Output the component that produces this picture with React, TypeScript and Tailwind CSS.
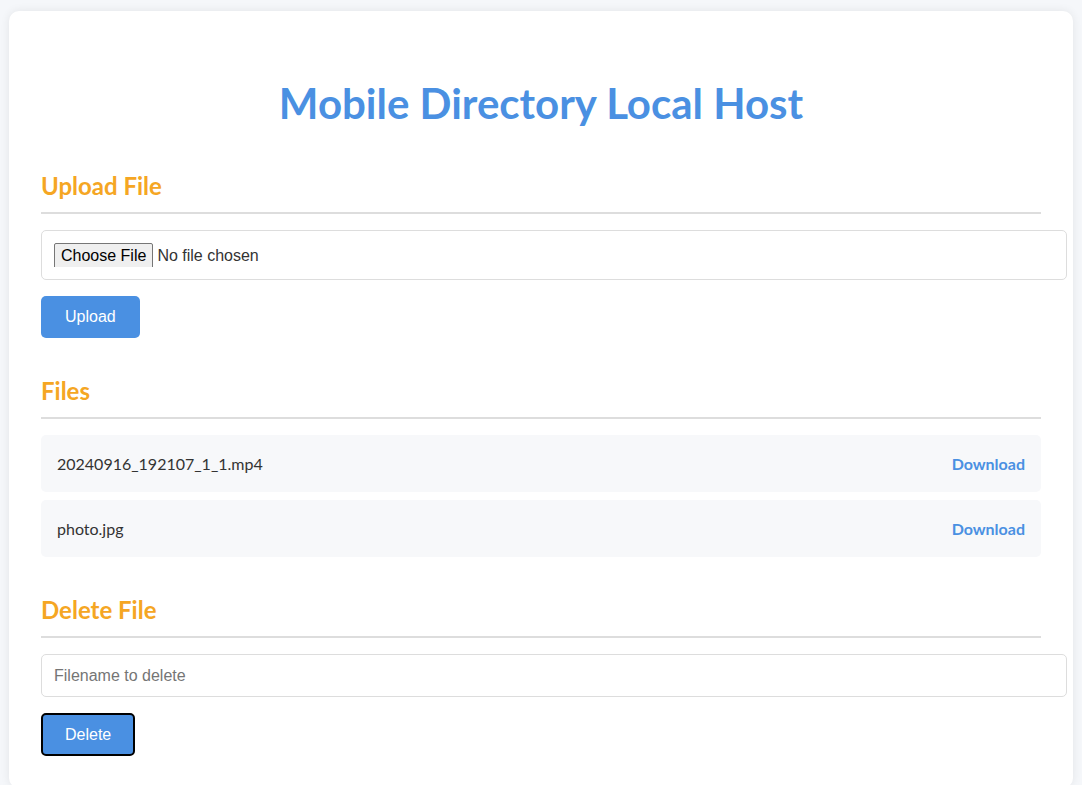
const files = ["20240916_192107_1_1.mp4", "photo.jpg"];

function SectionTitle({ children, className = "" }: { children: string; className?: string }) {
  return (
    <h2
      className={`border-b-2 border-[#dddddd] pb-[10px] text-2xl leading-8 font-bold text-[#f5a623] ${className}`}
    >
      {children}
    </h2>
  );
}

export default function App() {
  return (
    <div className="min-h-screen bg-[#f5f7fa] px-[9px] pt-[11px] font-['Lato','Noto_Sans',sans-serif]">
      <div className="rounded-[10px] bg-white px-8 pt-[68px] pb-8 shadow-[0_0_10px_rgba(0,0,0,0.08)]">
        <h1 className="text-center text-[42px] leading-[48px] font-bold text-[#4a90e2]">
          Mobile Directory Local Host
        </h1>

        <SectionTitle className="mt-[43px]">Upload File</SectionTitle>
        <div className="mt-4 w-[1026px] rounded-[5px] border border-[#dddddd] px-3 py-3 font-['Liberation_Sans',Arial,sans-serif] text-base text-[#333]">
          <input type="file" className="block h-6 text-base file:mr-1 file:rounded-[2px] file:border file:border-[#767676] file:bg-[#efefef] file:px-[6px] file:py-0 file:text-base file:text-black" />
        </div>
        <button className="mt-4 h-[42px] rounded-[5px] bg-[#4a90e2] px-6 font-['Liberation_Sans',Arial,sans-serif] text-base text-white">
          Upload
        </button>

        <SectionTitle className="mt-[37px]">Files</SectionTitle>
        <ul className="mt-4 flex flex-col gap-2">
          {files.map((f) => (
            <li
              key={f}
              className="flex h-[57px] items-center justify-between rounded-[5px] bg-[#f7f8fa] px-4 text-base text-[#333]"
            >
              <span>{f}</span>
              <a href="#" className="font-bold text-[#4a90e2]">
                Download
              </a>
            </li>
          ))}
        </ul>

        <SectionTitle className="mt-[37px]">Delete File</SectionTitle>
        <input
          type="text"
          placeholder="Filename to delete"
          className="mt-4 block h-[43px] w-[1026px] rounded-[5px] border border-[#dddddd] px-3 font-['Liberation_Sans',Arial,sans-serif] text-base text-[#333] placeholder:text-[#757575]"
        />
        <button className="mt-4 h-[43px] rounded-[5px] border-2 border-black bg-[#4a90e2] px-[22px] font-['Liberation_Sans',Arial,sans-serif] text-base text-white">
          Delete
        </button>
      </div>
    </div>
  );
}
